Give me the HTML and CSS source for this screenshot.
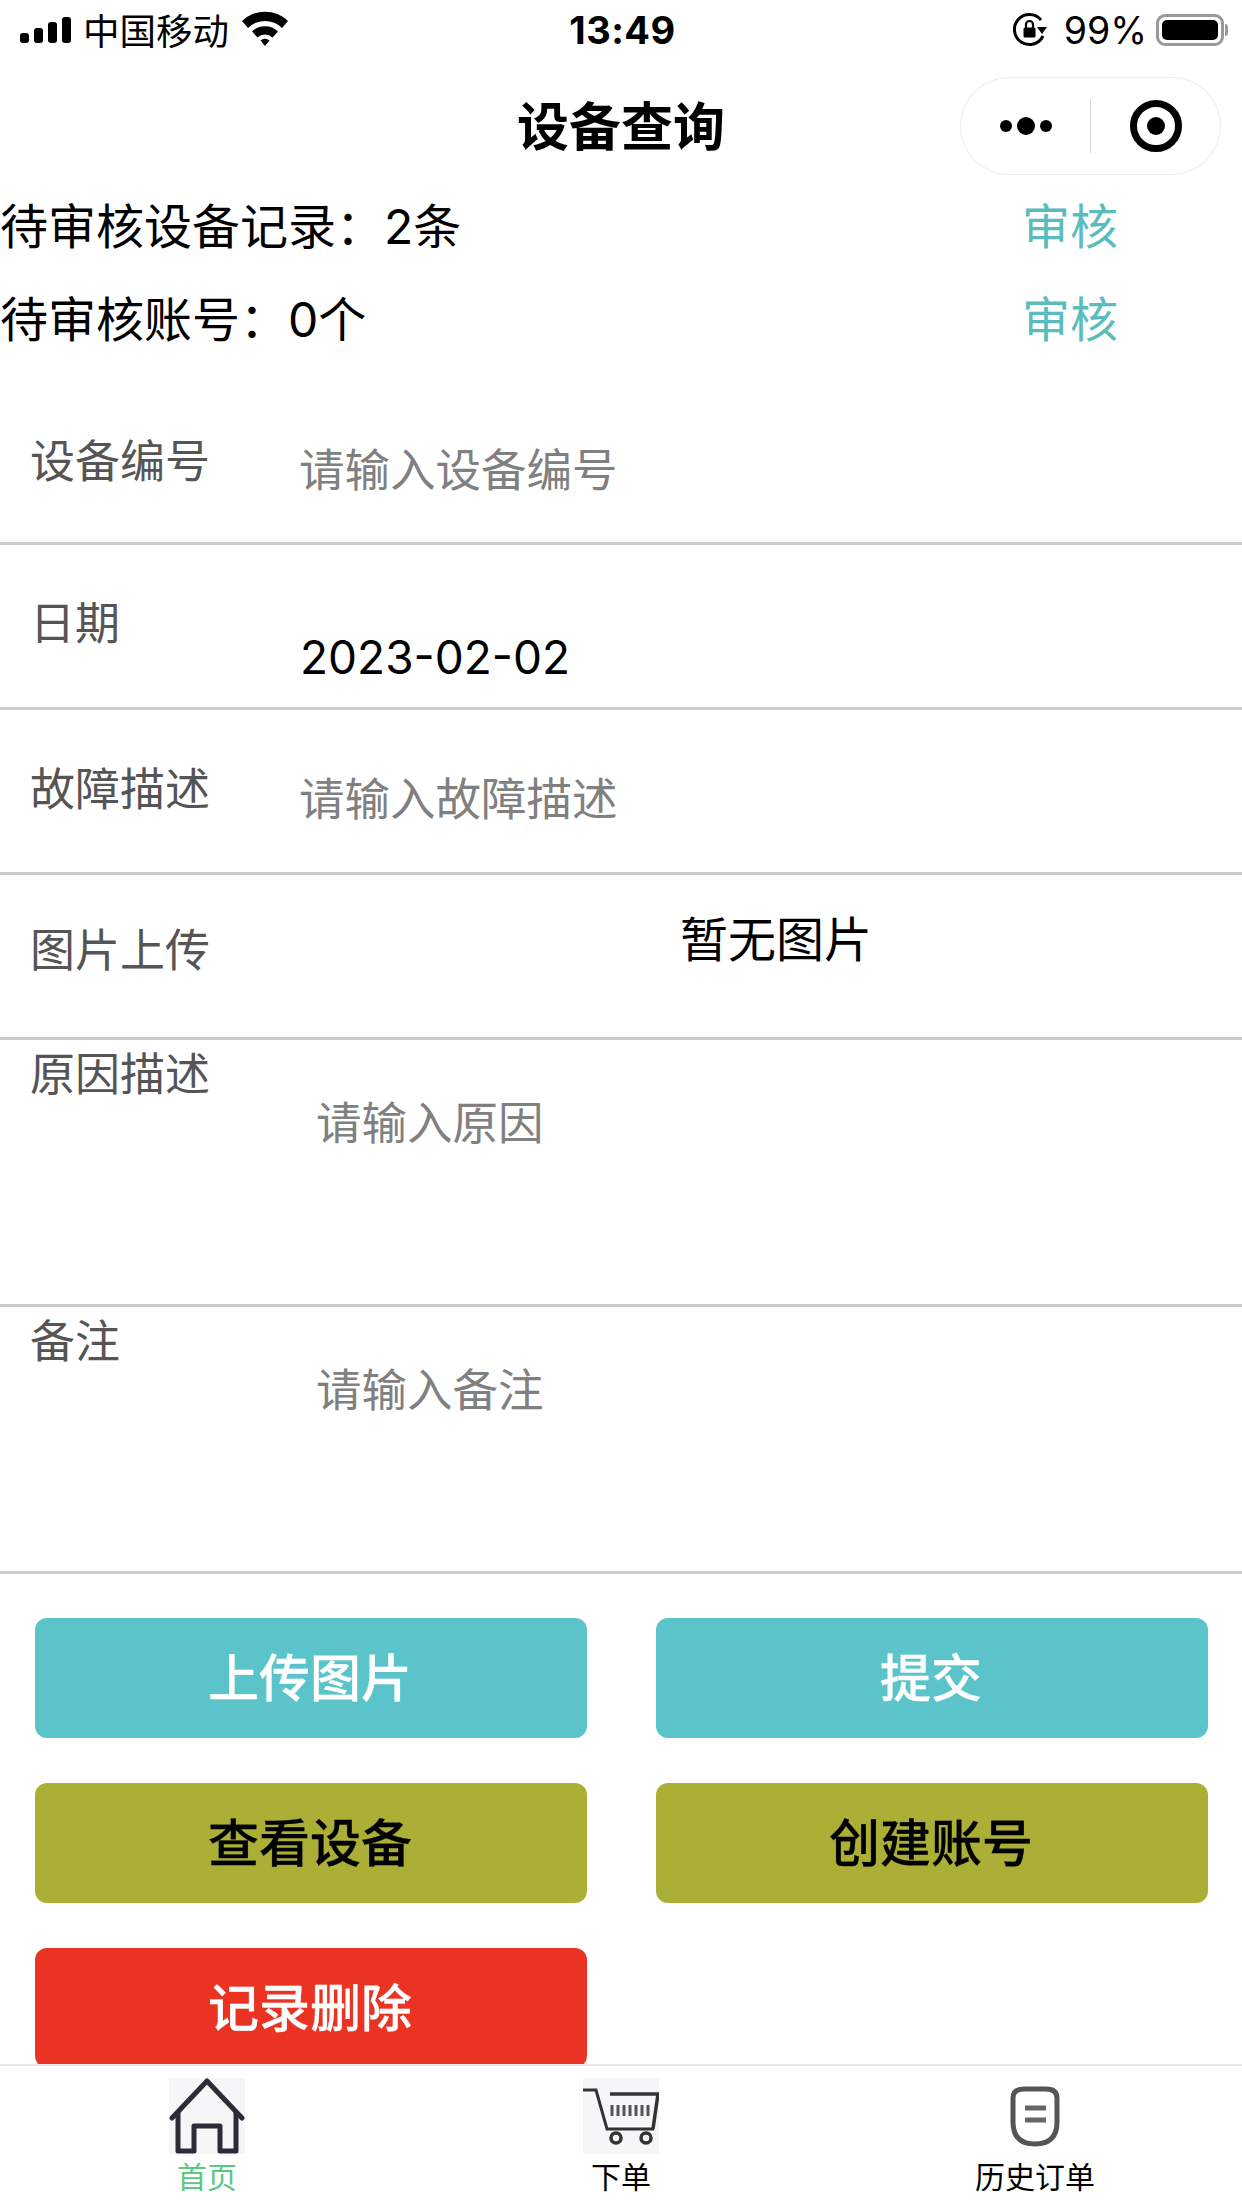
FILE: index.html
```html
<!DOCTYPE html>
<html lang="zh-CN">
<head>
<meta charset="utf-8">
<title>设备查询</title>
<link rel="stylesheet" href="styles.css">
</head>
<body>
<div class="app">
  <header class="status">
    <div class="status-left">
      <svg class="sig" viewBox="0 0 52 26"><rect x="0" y="16" width="9" height="10" rx="3"/><rect x="14" y="11" width="9" height="15" rx="3"/><rect x="28" y="5" width="9" height="21" rx="3"/><rect x="42" y="0" width="9" height="26" rx="3"/></svg>
      <span class="carrier">中国移动</span>
      <svg class="wifi" viewBox="0 0 48 36"><path d="M1 11 A33 33 0 0 1 47 11 L41 18 A24 24 0 0 0 7 18Z"/><path d="M11 21.500 A19 19 0 0 1 37 21.500 L31.500 27.500 A11 11 0 0 0 16.500 27.500Z"/><path d="M19.500 30.500 A6.500 6.500 0 0 1 28.500 30.500 L24 36Z"/></svg>
    </div>
    <div class="time">13:49</div>
    <div class="status-right">
      <svg class="lock" viewBox="0 0 36 36"><path d="M31 24 A15 15 0 1 1 29 8" fill="none" stroke="#000" stroke-width="3"/><path d="M25 15 L35 15 L30 22Z"/><rect x="11.500" y="15.500" width="12" height="10" rx="1.500"/><path d="M14 16 V12.500 a3.500 3.500 0 0 1 7 0 V16" fill="none" stroke="#000" stroke-width="2.200"/></svg>
      <span class="pct">99%</span>
      <span class="bat"><span class="bat-fill"></span></span><span class="bat-tip"></span>
    </div>
  </header>

  <nav class="nav">
    <span class="nav-side"></span>
    <h1 class="title">设备查询</h1>
    <div class="nav-side nav-end">
      <div class="capsule">
        <span class="cap-part dots"><i class="dot"></i><i class="dot dot-big"></i><i class="dot"></i></span>
        <span class="cap-sep"></span>
        <span class="cap-part"><span class="ring"><span class="ring-core"></span></span></span>
      </div>
    </div>
  </nav>

  <main class="main">
    <section class="pending">
      <div class="pending-row"><span>待审核设备记录：2条</span><a class="audit">审核</a></div>
      <div class="pending-row"><span>待审核账号：0个</span><a class="audit">审核</a></div>
    </section>

    <section class="form">
      <div class="row row-a"><span class="label label-1">设备编号</span><span class="ph ph-1">请输入设备编号</span></div>
      <div class="row row-b"><span class="label label-2">日期</span><span class="date">2023-02-02</span></div>
      <div class="row row-b"><span class="label label-3">故障描述</span><span class="ph ph-3">请输入故障描述</span></div>
      <div class="row row-b"><span class="label label-4">图片上传</span><span class="noimg">暂无图片</span></div>
      <div class="row row-c"><span class="label label-5">原因描述</span><span class="ph ph-5">请输入原因</span></div>
      <div class="row row-c"><span class="label label-5">备注</span><span class="ph ph-5">请输入备注</span></div>
    </section>

    <section class="btns">
      <button class="btn teal">上传图片</button>
      <button class="btn teal">提交</button>
      <button class="btn olive">查看设备</button>
      <button class="btn olive">创建账号</button>
      <button class="btn red">记录删除</button>
    </section>
  </main>

  <footer class="tabs">
    <div class="tab">
      <span class="tab-icon tinted">
        <svg viewBox="0 0 76 76"><path d="M3 40 L38 3 L73 40" fill="none" stroke="#2a2c38" stroke-width="5" stroke-linecap="round" stroke-linejoin="round"/><path d="M9 33 V73 H25 V48 H51 V73 H67 V33" fill="none" stroke="#2a2c38" stroke-width="5" stroke-linejoin="round"/></svg>
      </span>
      <span class="tab-label on">首页</span>
    </div>
    <div class="tab">
      <span class="tab-icon tinted">
        <svg viewBox="0 0 76 76"><path d="M0 12 H13 L24 51 H71" fill="none" stroke="#333" stroke-width="3"/><path d="M27 16 H75 L70 51" fill="none" stroke="#333" stroke-width="3.500"/><path d="M29 27 v11 M35 27 v11 M41 27 v11 M47 27 v11 M53 27 v11 M59 27 v11 M65 27 v11" stroke="#555" stroke-width="3"/><circle cx="33" cy="60" r="5" fill="none" stroke="#333" stroke-width="3.500"/><circle cx="63" cy="60" r="5" fill="none" stroke="#333" stroke-width="3.500"/></svg>
      </span>
      <span class="tab-label">下单</span>
    </div>
    <div class="tab">
      <span class="tab-icon">
        <svg viewBox="0 0 76 76"><path d="M16 20 Q16 11 27 11 H49 Q60 11 60 20 V44 Q60 66 38 66 Q16 66 16 44Z" fill="none" stroke="#555" stroke-width="5"/><path d="M28 30 H49 M28 42 H49" stroke="#666" stroke-width="5"/></svg>
      </span>
      <span class="tab-label">历史订单</span>
    </div>
  </footer>
</div>
</body>
</html>
```
FILE: styles.css
```css
* { box-sizing: border-box; }
html, body { margin: 0; padding: 0; background: #fff; }
body { font-family: "Inter", "Noto Sans CJK SC", sans-serif; color: #000; }
.app { width: 1242px; height: 2208px; display: flex; flex-direction: column; overflow: hidden; }

.status { height: 60px; flex: none; display: grid; grid-template-columns: 1fr auto 1fr; align-items: center; padding: 0 14px 0 20px; }
.status-left { display: flex; align-items: center; }
.sig { width: 52px; height: 26px; }
.carrier { font-family: "Noto Sans CJK SC", sans-serif; font-size: 36.500px; line-height: 60px; margin-left: 11px; white-space: nowrap; }
.wifi { width: 50px; height: 36px; margin-left: 11px; margin-top: -4px; }
.time { font-size: 38px; font-weight: 700; letter-spacing: 0.5px; margin-left: -3px; }
.status-right { display: flex; align-items: center; justify-content: flex-end; }
.lock { width: 36px; height: 36px; }
.pct { font-size: 37.500px; margin-left: 16px; }
.bat { width: 68px; height: 32px; border: 3px solid #999; border-radius: 9px; padding: 3px; margin-left: 9px; display: flex; }
.bat-fill { flex: 1; background: #000; border-radius: 5px; }
.bat-tip { width: 3px; height: 12px; background: #999; margin-left: 1px; border-radius: 0 3px 3px 0; }

.nav { height: 116px; flex: none; display: grid; grid-template-columns: 1fr auto 1fr; padding-top: 17px; align-items: start; }
.title { margin: -2px 0 0; font-family: "Noto Sans CJK SC", sans-serif; font-size: 52px; line-height: 98px; font-weight: 700; }
.nav-end { display: flex; justify-content: flex-end; padding-right: 21px; }
.capsule { width: 261px; height: 98px; border: 1px solid #ececec; border-radius: 49px; display: flex; align-items: center; background: #fff; position: relative; }
.cap-part { flex: 1; display: flex; align-items: center; justify-content: center; }
.dots { gap: 5px; }
.dot { width: 12px; height: 12px; border-radius: 50%; background: #000; }
.dot-big { width: 18px; height: 18px; }
.cap-sep { width: 1px; height: 54px; background: #d8d8d8; }
.ring { width: 52px; height: 52px; border: 7px solid #000; border-radius: 50%; display: flex; align-items: center; justify-content: center; }
.ring-core { width: 18px; height: 18px; background: #000; border-radius: 50%; }

.main { flex: 1; min-height: 0; overflow: hidden; }
.pending { padding-bottom: 8px; }
.pending-row { height: 93px; display: flex; justify-content: space-between; align-items: center; font-size: 48px; padding-right: 124px; }
.audit { color: #5abcbc; font-size: 48px; }

.row { display: grid; grid-template-columns: 300px 1fr; border-bottom: 3px solid #ccc; align-items: start; }
.row-a { height: 175px; }
.row-b { height: 165px; }
.row-c { height: 267px; }
.label { padding-left: 30px; font-family: "Noto Sans CJK SC", sans-serif; font-size: 45px; line-height: 60px; color: #555; }
.label-1 { margin-top: 59px; }
.label-2 { margin-top: 46px; }
.label-3 { margin-top: 47px; }
.label-4 { margin-top: 43px; }
.label-5 { margin-top: 2px; }
.ph { font-family: "Noto Sans CJK SC", sans-serif; font-size: 45.500px; line-height: 60px; color: #808080; margin-left: -1px; }
.ph-1 { margin-top: 67px; }
.ph-3 { margin-top: 56px; }
.ph-5 { margin-top: 50px; margin-left: 16px; }
.date { font-size: 46px; line-height: 60px; margin-top: 82px; }
.noimg { font-family: "Noto Sans CJK SC", sans-serif; font-size: 48px; line-height: 60px; margin-top: 31px; margin-left: 380px; }

.btns { display: grid; grid-template-columns: 552px 552px; column-gap: 69px; row-gap: 45px; padding: 44px 0 0 35px; }
.btn { height: 120px; border: 0; border-radius: 12px; font-family: "Noto Sans CJK SC", sans-serif; font-size: 51px; font-weight: 500; padding: 0 2px 6px 0; -webkit-text-stroke: 0.3px currentColor; }
.teal { background: #5ac4ca; color: #fff; }
.olive { background: #abaf35; color: #000; }
.red { background: #eb3323; color: #fff; }

.tabs { height: 144px; flex: none; border-top: 2px solid #e8e8e8; background: #fff; display: grid; grid-template-columns: repeat(3, 1fr); padding-top: 12px; }
.tab { display: flex; flex-direction: column; align-items: center; }
.tab-icon { width: 76px; height: 76px; display: block; }
.tab-icon svg { width: 76px; height: 76px; display: block; }
.tinted { background: #f6f6f8; }
.tab-label { font-family: "Noto Sans CJK SC", sans-serif; font-size: 30px; line-height: 44px; margin-top: -1px; }
.on { color: #5cc77f; }
```
